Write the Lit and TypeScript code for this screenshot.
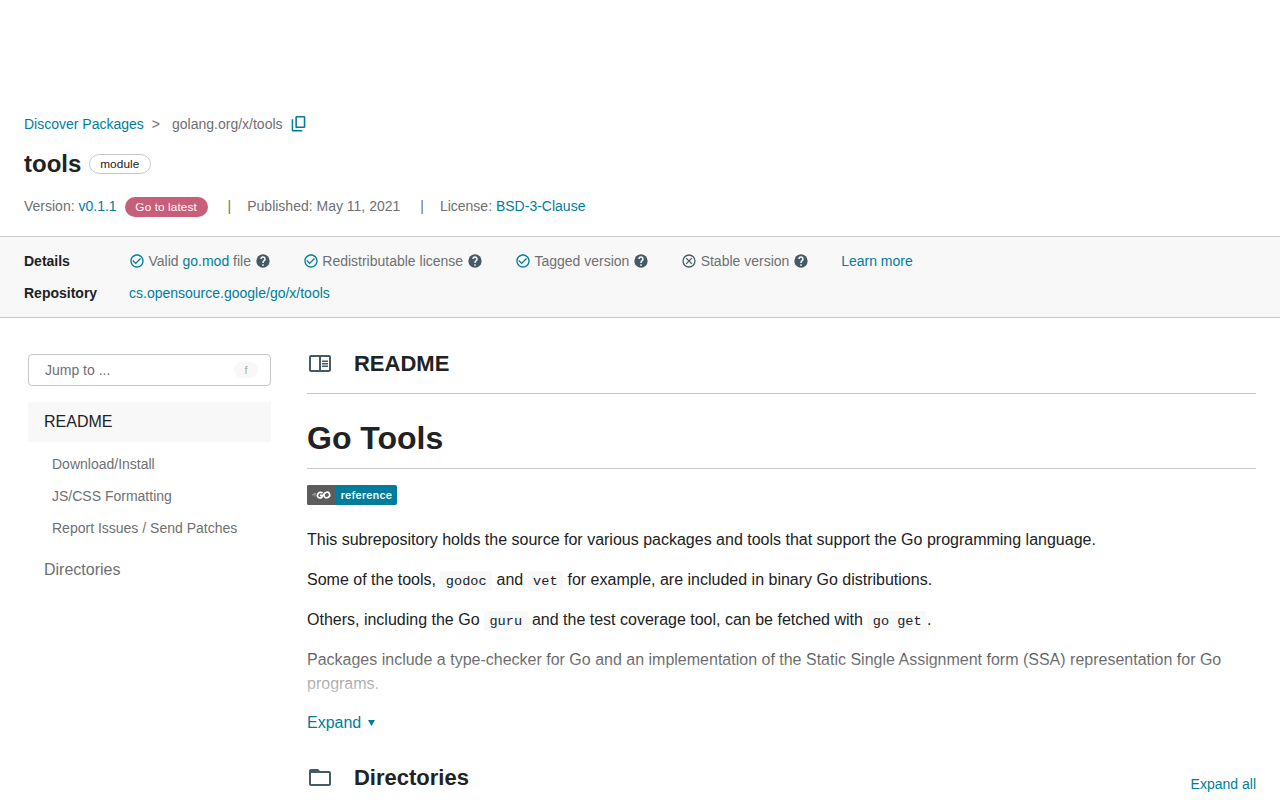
import { LitElement, html, css } from "lit";
import { customElement } from "lit/decorators.js";

const check = html`<svg width="16" height="16" viewBox="0 0 24 24" fill="#007d9c"><path d="M16.59 7.58L10 14.17l-3.59-3.58L5 12l5 5 8-8zM12 2C6.48 2 2 6.48 2 12s4.48 10 10 10 10-4.48 10-10S17.52 2 12 2zm0 18c-4.42 0-8-3.58-8-8s3.58-8 8-8 8 3.58 8 8-3.58 8-8 8z"/></svg>`;
const cross = html`<svg width="16" height="16" viewBox="0 0 24 24" fill="none" stroke="#455a64" stroke-width="1.9"><circle cx="12" cy="12" r="9"/><path d="M7.700 7.700l8.600 8.600M16.300 7.700l-8.600 8.600"/></svg>`;
const help = html`<svg width="16" height="16" viewBox="0 0 24 24"><circle cx="12" cy="12" r="10" fill="#455a64"/><path d="M9 9a3 3 0 1 1 4.600 2.500Q12 12.700 12 15M12 17v2" fill="none" stroke="#f8f8f8" stroke-width="2.300"/></svg>`;
const copy = html`<svg class="copy" width="16" height="16" viewBox="0 0 24 24" fill="#007d9c"><path d="M18.500 0H8.500c-1.100 0-2 .9-2 2v14c0 1.100.9 2 2 2h11c1.100 0 2-.9 2-2V2c0-1.100-.9-2-2-2zm.6 15.700H8.900V2.300h10.200zM1 5v16.200c0 1.100.9 2 2 2h14v-2.300H3.300V5z"/></svg>`;
const reader = html`<svg width="24" height="24" viewBox="0 0 24 24" fill="#455a64"><path fill-rule="evenodd" d="M21 4H3c-1.1 0-2 .9-2 2v13c0 1.1.9 2 2 2h18c1.1 0 2-.9 2-2V6c0-1.1-.9-2-2-2zM3 19V6h8v13H3zm18 0h-8V6h8v13zM14 9.5h6V11h-6zM14 12h6v1.5h-6zM14 14.500h6V16h-6z"/></svg>`;
const folder = html`<svg width="24" height="24" viewBox="0 0 24 24" fill="#455a64"><path d="M21 6h-9l-2-2H3C1.900 4 1 4.900 1 6v13c0 1.100.9 2 2 2h18c1.100 0 2-.9 2-2V8c0-1.100-.9-2-2-2zm0 13H3V8h18v11z"/></svg>`;

@customElement("app-root")
export class AppRoot extends LitElement {
  static styles = css`
    :host { display: block; height: 800px; overflow: hidden; box-sizing: border-box; padding-top: 112px; background: #fff; color: #202224; font: 16px/24px "Liberation Sans", Arial, sans-serif; }
    * { box-sizing: border-box; }
    svg { display: block; flex: none; }
    a { color: #007d9c; text-decoration: none; }
    h1, h2, p { margin: 0; }
    .crumbs { display: flex; align-items: center; height: 24px; padding-left: 24px; font-size: 14px; color: #6e7072; }
    .sep { margin: 0 12px 0 8px; }
    .copy { margin-left: 8.8px; }
    .title { display: flex; align-items: center; height: 32px; margin-top: 12px; padding-left: 24px; }
    .title h1 { font-size: 24px; line-height: 32px; }
    .pill { display: flex; align-items: center; justify-content: center; height: 20px; border-radius: 10px; font-size: 11.8px; letter-spacing: 0.1px; line-height: 18px; }
    .module { width: 62px; margin-left: 8px; padding-right: 1px; border: 1px solid #c6c8ca; }
    .latest { width: 83px; margin: 2px 0 0 8px; background: #c85e7a; color: #fff; }
    .meta { display: flex; align-items: center; height: 24px; margin-top: 14px; padding-left: 24px; font-size: 14px; color: #6e7072; white-space: pre; }
    .bar { width: 39.6px; text-align: center; padding-left: 4px; }
    .details { height: 82px; margin-top: 18px; padding: 8px 24px; background: #f8f8f8; border: solid #c6c8ca; border-width: 1px 0; font-size: 14px; color: #6e7072; }
    .row { display: flex; align-items: center; height: 32px; }
    .row b { width: 105px; color: #202224; }
    .item { display: flex; align-items: center; margin-right: 31.9px; white-space: pre; }
    .label { margin: 0 3.9px 0 3.5px; }
    .main { display: flex; padding: 24px 24px 0 28px; }
    .side { width: 243px; margin-right: 36px; padding-top: 12px; color: #6e7072; }
    .jump { display: flex; align-items: center; justify-content: space-between; height: 32px; padding: 0 12px 0 16px; border: 1px solid #c6c8ca; border-radius: 4px; font-size: 14px; }
    .key { width: 24px; height: 16px; border-radius: 8px; background: #f8f8f8; color: #aaacae; font-size: 11px; line-height: 17px; text-align: center; }
    .nav { display: flex; align-items: center; height: 40px; padding-left: 16px; }
    .active { margin: 16px 0 6px; background: #f8f8f8; color: #202224; }
    .sub { display: flex; align-items: center; height: 32px; padding-left: 24px; font-size: 14px; }
    .dirs { margin-top: 6px; }
    .content { flex: 1; min-width: 0; }
    .head { display: flex; align-items: center; gap: 22.3px; padding-left: 0.7px; }
    .head h2 { font-size: 22px; line-height: 24px; padding-top: 2px; }
    .readme-head { height: 52px; padding-bottom: 9px; border-bottom: 1px solid #c6c8ca; }
    .go-tools { height: 75px; padding-top: 24px; border-bottom: 1px solid #c6c8ca; font-size: 32px; line-height: 41px; }
    .badge { display: flex; width: 90px; height: 20px; margin: 16px 0 23px; border-radius: 2px; overflow: hidden; background: #007d9c; color: #fff; }
    .badge-label { flex: 1; text-align: center; font: 600 10.4px/21px Inter, "Open Sans", sans-serif; letter-spacing: 0.35px; }
    .clip { position: relative; height: 169px; overflow: hidden; }
    .clip p { margin-bottom: 16px; }
    .clip::after { content: ""; position: absolute; inset: auto 0 0 0; height: 64px; background: linear-gradient(rgba(255,255,255,0), rgba(255,255,255,0.8)); }
    code { font: 13.6px/20px "Liberation Mono", monospace; padding: 3px 5.44px 2px; border-radius: 3px; background: #f8f8f8; }
    .expand { display: flex; align-items: center; gap: 7px; margin-top: 14px; }
    .dir-head { display: flex; justify-content: space-between; margin-top: 29px; }
    .all { font-size: 14px; margin-top: 8px; }
    .dir-head .head { height: 26px; }
  `;

  item(icon: unknown, label: unknown) {
    return html`<span class="item">${icon}<span class="label">${label}</span>${help}</span>`;
  }

  render() {
    return html`
      <nav class="crumbs"><a>Discover Packages</a><span class="sep">&gt;</span><span>golang.org/x/tools</span>${copy}</nav>
      <div class="title"><h1>tools</h1><span class="pill module">module</span></div>
      <div class="meta"><span>Version: <a>v0.1.1</a></span><span class="pill latest">Go to latest</span><span class="bar">|</span><span>Published: May 11, 2021</span><span class="bar">|</span><span>License: <a>BSD-3-Clause</a></span></div>
      <section class="details">
        <div class="row"><b>Details</b>
          ${this.item(check, html`Valid <a>go.mod</a> file`)}
          ${this.item(check, "Redistributable license")}
          ${this.item(check, "Tagged version")}
          ${this.item(cross, "Stable version")}
          <a>Learn more</a></div>
        <div class="row"><b>Repository</b><a>cs.opensource.google/go/x/tools</a></div>
      </section>
      <div class="main">
        <aside class="side">
          <div class="jump"><span>Jump to ...</span><span class="key">f</span></div>
          <div class="nav active">README</div>
          <div class="sub">Download/Install</div>
          <div class="sub">JS/CSS Formatting</div>
          <div class="sub">Report Issues / Send Patches</div>
          <div class="nav dirs">Directories</div>
        </aside>
        <main class="content">
          <div class="head readme-head">${reader}<h2>README</h2></div>
          <h1 class="go-tools">Go Tools</h1>
          <div class="badge">
            <svg width="29" height="20" viewBox="0 0 29 20"><path fill="#5c5c5c" d="M0 0h29v20H0z"/><g fill="none" stroke="#fff"><path stroke-width=".7" opacity=".65" d="M6.500 8.700h2.500M5 9.800h3.500M7.500 11h1"/><g stroke-width="1.700"><path d="M15.500 8.300C14.500 7 12 7 10.900 8.900 9.700 11 10.800 12.900 12.700 12.900 14.400 12.900 15.500 11.900 15.700 10.300H13"/><ellipse cx="19.800" cy="10" rx="2.900" ry="2.650" transform="rotate(-20 19.800 10)"/></g></g></svg>
            <span class="badge-label">reference</span>
          </div>
          <div class="clip">
            <p>This subrepository holds the source for various packages and tools that support the Go programming language.</p>
            <p>Some of the tools, <code>godoc</code> and <code>vet</code> for example, are included in binary Go distributions.</p>
            <p>Others, including the Go <code>guru</code> and the test coverage tool, can be fetched with <code>go get</code>.</p>
            <p>Packages include a type-checker for Go and an implementation of the Static Single Assignment form (SSA) representation for Go programs.</p>
          </div>
          <a class="expand">Expand<svg width="7" height="6" viewBox="0 0 7 6" fill="#007d9c"><path d="M0 0h7L3.500 6z"/></svg></a>
          <div class="dir-head"><div class="head">${folder}<h2>Directories</h2></div><a class="all">Expand all</a></div>
        </main>
      </div>`;
  }
}
